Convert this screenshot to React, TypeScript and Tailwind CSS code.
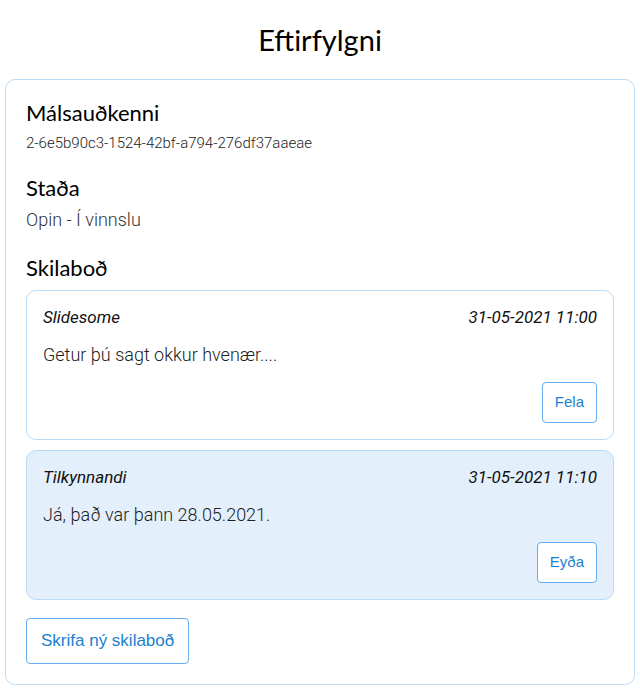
const messages = [
  {
    id: 1,
    author: "Slidesome",
    time: "31-05-2021 11:00",
    text: "Getur þú sagt okkur hvenær....",
    action: "Fela",
    mine: false,
  },
  {
    id: 2,
    author: "Tilkynnandi",
    time: "31-05-2021 11:10",
    text: "Já, það var þann 28.05.2021.",
    action: "Eyða",
    mine: true,
  },
];

const heading = "font-['Lato',sans-serif] text-[22px] leading-[28px] text-black";
const button =
  "rounded-[4px] border border-[#64aef0] bg-white font-['Liberation_Sans',Arial,sans-serif] text-[#1a7fd0]";

export default function App() {
  return (
    <div className="min-h-[700px] bg-white px-[5px] pt-[22px] font-['Roboto',sans-serif]">
      <h1 className="text-center font-['Lato',sans-serif] text-[29px] leading-[36px] text-black">
        Eftirfylgni
      </h1>

      <div className="mt-[21px] rounded-[10px] border border-[#bbdcf7] px-5 pb-5 pt-[19px]">
        <h2 className={heading}>Málsauðkenni</h2>
        <p className="mt-[6px] text-[15px] font-light leading-[20px] text-[#222]">
          2-6e5b90c3-1524-42bf-a794-276df37aaeae
        </p>

        <h2 className={`${heading} mt-[21px]`}>Staða</h2>
        <p className="mt-[6px] text-[18px] font-light leading-[24px] text-[#333]">Opin - Í vinnslu</p>

        <h2 className={`${heading} mt-[22px]`}>Skilaboð</h2>

        <div className="mt-[8px] flex flex-col gap-[10px]">
          {messages.map((m) => (
            <div
              key={m.id}
              className={`rounded-[10px] border border-[#bbdcf7] px-4 pb-4 pt-[15px] ${
                m.mine ? "bg-[#e3effb]" : "bg-white"
              }`}
            >
              <div className="flex items-center justify-between text-[17px] italic leading-[22px] text-[#111]">
                <span>{m.author}</span>
                <span>{m.time}</span>
              </div>
              <p className="mt-[15px] text-[18px] font-light leading-[24px] text-[#222]">{m.text}</p>
              <div className="mt-[15px] flex justify-end">
                <button type="button" className={`${button} h-[41px] px-[12px] text-[15px]`}>
                  {m.action}
                </button>
              </div>
            </div>
          ))}
        </div>

        <button type="button" className={`${button} mt-[18px] h-[46px] px-[14px] text-[17px]`}>
          Skrifa ný skilaboð
        </button>
      </div>
    </div>
  );
}
